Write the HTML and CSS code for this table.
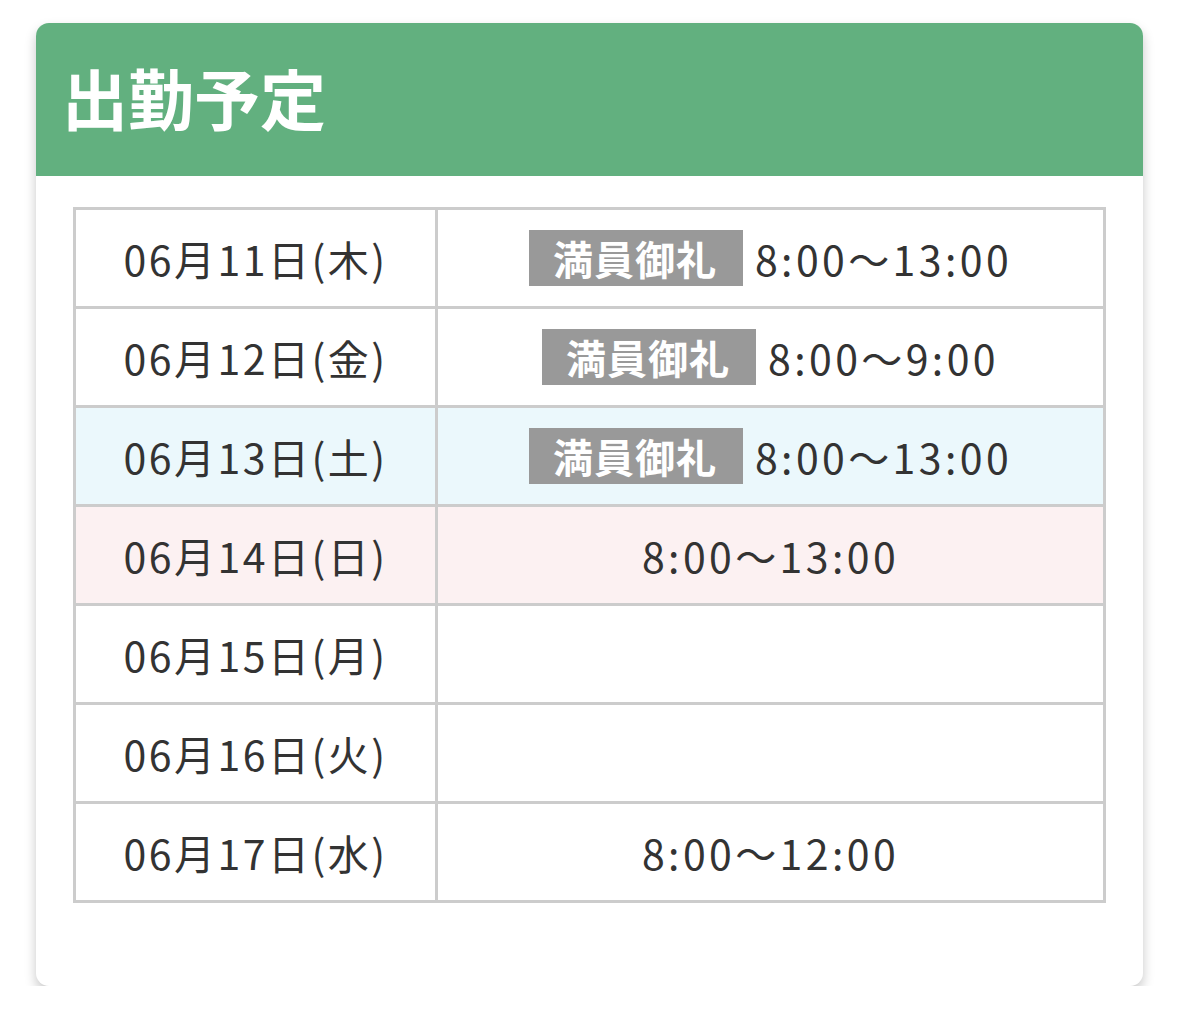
FILE: index.html
```html
<!DOCTYPE html>
<html lang="ja">
<head>
<meta charset="utf-8">
<link rel="stylesheet" href="styles.css">
</head>
<body>
<section class="card">
  <h2 class="card-title">出勤予定</h2>
  <div class="card-body">
    <table class="schedule">
      <tr>
        <td class="date"><div class="cell">06月11日(木)</div></td>
        <td class="time"><div class="cell"><span class="badge">満員御礼</span><span class="hours">8:00〜13:00</span></div></td>
      </tr>
      <tr>
        <td class="date"><div class="cell">06月12日(金)</div></td>
        <td class="time"><div class="cell"><span class="badge">満員御礼</span><span class="hours">8:00〜9:00</span></div></td>
      </tr>
      <tr class="sat">
        <td class="date"><div class="cell">06月13日(土)</div></td>
        <td class="time"><div class="cell"><span class="badge">満員御礼</span><span class="hours">8:00〜13:00</span></div></td>
      </tr>
      <tr class="sun">
        <td class="date"><div class="cell">06月14日(日)</div></td>
        <td class="time"><div class="cell"><span class="hours">8:00〜13:00</span></div></td>
      </tr>
      <tr>
        <td class="date"><div class="cell">06月15日(月)</div></td>
        <td class="time"><div class="cell"></div></td>
      </tr>
      <tr>
        <td class="date"><div class="cell">06月16日(火)</div></td>
        <td class="time"><div class="cell"></div></td>
      </tr>
      <tr>
        <td class="date"><div class="cell">06月17日(水)</div></td>
        <td class="time"><div class="cell"><span class="hours">8:00〜12:00</span></div></td>
      </tr>
    </table>
  </div>
</section>
</body>
</html>
```

FILE: styles.css
```css
html, body {
  margin: 0;
  padding: 0;
  background: #ffffff;
}
body {
  padding: 23px 0 0 36px;
  font-family: "Noto Sans CJK JP", "Noto Sans", sans-serif;
  color: #333333;
}
.card {
  width: 1107px;
  height: 963px;
  background: #ffffff;
  border-radius: 13px;
  box-shadow: 0 6px 12px rgba(0, 0, 0, 0.22);
  overflow: hidden;
  box-sizing: border-box;
}
.card-title {
  margin: 0;
  height: 153px;
  box-sizing: border-box;
  background: #62b07f;
  color: #ffffff;
  font-size: 66px;
  font-weight: 700;
  line-height: 147px;
  padding-left: 26px;
}
.card-body {
  padding: 31px 37px 0 37px;
}
.schedule {
  width: 1033px;
  border-collapse: collapse;
  border: 3px solid #cccccc;
}
.schedule td {
  border: 3px solid #cccccc;
  height: 96px;
  padding: 0;
  font-size: 41px;
  color: #333333;
}
.schedule td.date {
  width: 359px;
}
.cell {
  display: flex;
  justify-content: center;
  align-items: center;
  height: 96px;
  letter-spacing: 2.5px;
  line-height: 1;
}
.hours {
  letter-spacing: 3.4px;
}
.schedule tr.sat td {
  background: #ebf8fc;
}
.schedule tr.sun td {
  background: #fcf1f2;
}
.badge {
  display: flex;
  align-items: center;
  background: #999999;
  color: #ffffff;
  font-weight: 700;
  font-size: 40px;
  letter-spacing: 1px;
  height: 56px;
  padding: 0 26px 0 24px;
  margin-right: 12px;
}
```
